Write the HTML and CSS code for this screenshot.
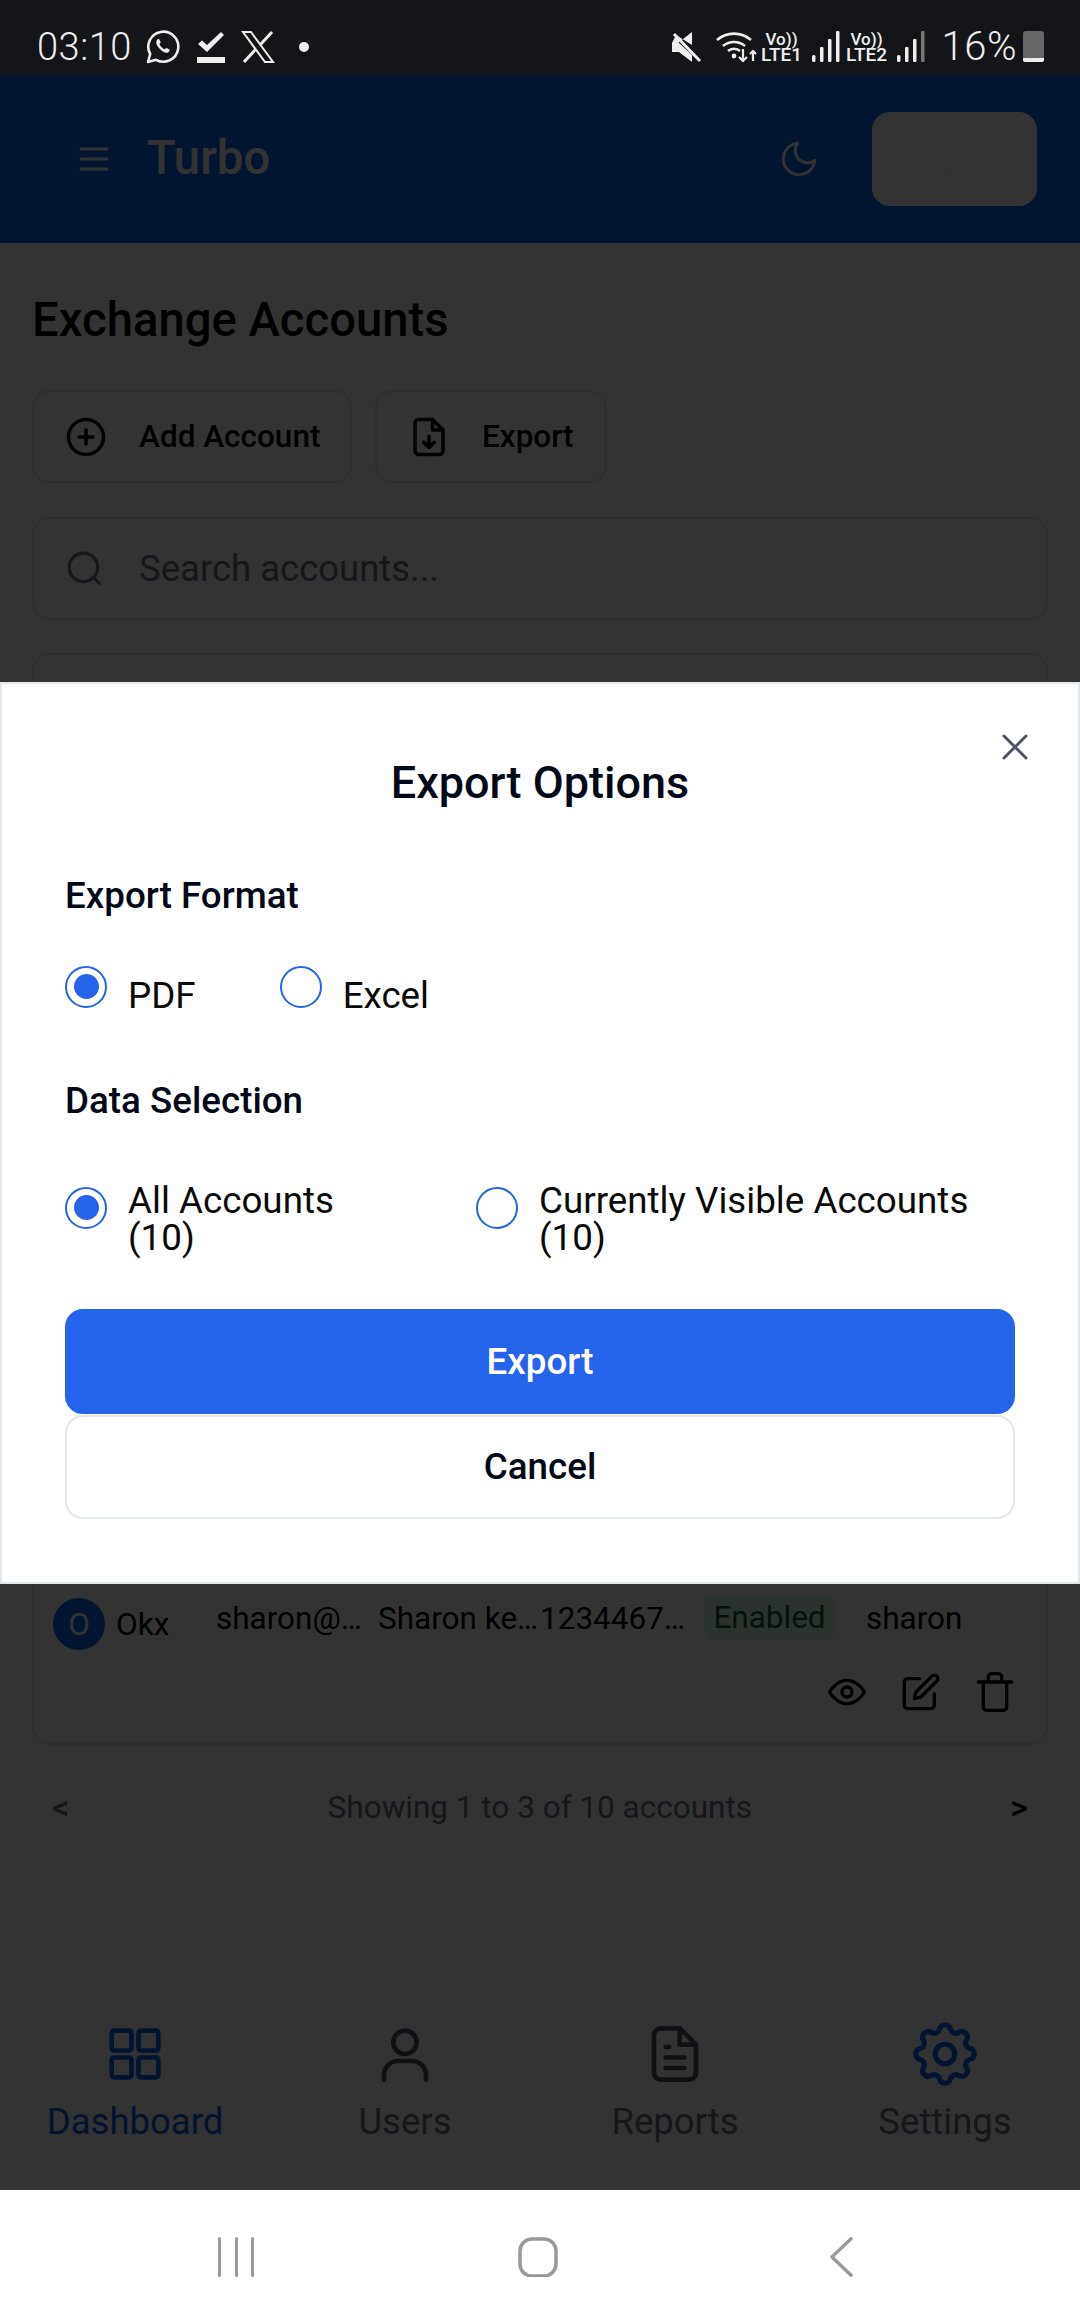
FILE: index.html
```html
<!DOCTYPE html>
<html lang="en">
<head>
    <meta charset="UTF-8">
    <meta name="viewport" content="width=device-width, initial-scale=1.0">
    <title>Exchange Accounts</title>
    <link rel="stylesheet" href="styles.css">
</head>
<body>
    <div class="phone">
        <div class="statusbar">
            <div class="status-left">
                <span class="status-text">03:10</span>
                <svg class="st-whatsapp" viewBox="0 0 36 36" fill="none" stroke="#eee" stroke-width="2.6"><path d="M3 33l2.2-8A15 15 0 1 1 11 30.8z" stroke-linejoin="round"/><path d="M12.5 10.5c-2 1.5-1.5 5 1.5 8.500s6.500 5.500 9 4.500c1.500-.6 2-2.500 1.500-3l-3-1.500c-.6-.2-1.500 1.300-2 1.300-1.500-.3-4.500-3.200-5-5 0-.6 1.300-1.300 1.200-2l-1.400-3c-.5-.6-1.500-.5-2.300.2z" fill="#eee" stroke="none"/></svg>
                <svg class="st-check" viewBox="0 0 28 32" fill="#eee"><path d="M1 13l4-3.500 5 4.500L24 1l3 3-17 17z"/><rect x="0" y="26" width="28" height="6"/></svg>
                <svg class="st-x" viewBox="0 0 34 32" fill="none" stroke="#eee" stroke-width="2"><path d="M2 1h8l22 30h-8z"/><path d="M31 1L19.500 13.500M14.500 18.500L3 31" stroke-width="3"/></svg>
                <span class="st-dot"></span>
            </div>
            <div class="status-right">
                <svg class="st-mute" viewBox="0 0 30 32" fill="#eee"><path d="M0 12h6L20 1v13L4 4z" /><path d="M0 12v9h7l13 10V24L6 11z"/><path d="M2 3l26 27" stroke="#eee" stroke-width="3"/></svg>
                <svg class="st-wifi" viewBox="0 0 42 32" fill="none" stroke="#eee" stroke-width="2.600"><path d="M1 9a26 26 0 0 1 34 0M7 15a17 17 0 0 1 22 0M12 20a9 9 0 0 1 12 0"/><circle cx="18" cy="25" r="2.400" fill="#eee" stroke="none"/><path d="M27 18v12M23 26l4 4 4-4M37 30V20M34 23l3-3 3 3" stroke-width="2.200"/></svg>
                <span class="lte"><span>Vo))</span><span>LTE1</span></span>
                <svg class="st-signal" viewBox="0 0 28 32" fill="#eee"><rect x="0" y="24" width="3.500" height="7" rx="1.500"/><rect x="8" y="16" width="3.500" height="15" rx="1"/><rect x="16" y="8" width="3.500" height="23" rx="1"/><rect x="24" y="0" width="3.500" height="31" rx="1"/></svg>
                <span class="lte lte2"><span>Vo))</span><span>LTE2</span></span>
                <svg class="st-signal st-signal2" viewBox="0 0 28 32" fill="#eee"><rect x="0" y="24" width="3.500" height="7" rx="1.500"/><rect x="8" y="16" width="3.500" height="15" rx="1"/><rect x="16" y="8" width="3.500" height="23" rx="1"/><rect x="24" y="0" width="3.500" height="31" rx="1" fill="#777"/></svg>
                <span class="status-text pct">16%</span>
                <span class="battery"></span>
            </div>
        </div>

        <div class="main">
            <header class="topbar">
                <svg class="burger" viewBox="0 0 30 24" fill="none" stroke="#fff" stroke-width="3" stroke-linecap="round"><path d="M2 2h26M2 12h26M2 22h26"/></svg>
                <span class="brand">Turbo</span>
                <svg class="moon" viewBox="0 0 24 24" fill="none" stroke="#fff" stroke-width="1.700" stroke-linecap="round" stroke-linejoin="round"><path d="M21 12.800A9 9 0 1 1 11.200 3a7 7 0 0 0 9.800 9.800z"/></svg>
                <button class="logout">Logout</button>
            </header>

            <div class="content">
                <h1>Exchange Accounts</h1>
                <div class="toolbar">
                    <button class="tool-btn add-btn">
                        <svg viewBox="0 0 24 24" fill="none" stroke="currentColor" stroke-width="2" stroke-linecap="round"><circle cx="12" cy="12" r="10"/><path d="M12 8v8M8 12h8"/></svg>
                        Add Account
                    </button>
                    <button class="tool-btn export-btn">
                        <svg viewBox="0 0 24 24" fill="none" stroke="currentColor" stroke-width="2" stroke-linecap="round" stroke-linejoin="round"><path d="M14 2H6a2 2 0 0 0-2 2v16a2 2 0 0 0 2 2h12a2 2 0 0 0 2-2V8z"/><path d="M14 2v6h6M12 11.500v6M9 15l3 3 3-3"/></svg>
                        Export
                    </button>
                </div>
                <div class="search">
                    <svg viewBox="0 0 24 24" fill="none" stroke="currentColor" stroke-width="2" stroke-linecap="round"><circle cx="11" cy="11" r="9"/><path d="M21 21l-3.500-3.500"/></svg>
                    <span>Search accounts...</span>
                </div>
                <div class="card">
                    <div class="acc-row">
                        <div class="acc-name"><span class="avatar">O</span><span class="okx">Okx</span></div>
                        <span class="cell c-email">sharon@…</span>
                        <span class="cell c-user">Sharon ke…</span>
                        <span class="cell c-key">1234467…</span>
                        <span class="badge">Enabled</span>
                        <span class="cell c-owner">sharon</span>
                    </div>
                    <div class="acc-actions">
                        <svg viewBox="0 0 24 24" fill="none" stroke="currentColor" stroke-width="2" stroke-linecap="round" stroke-linejoin="round"><path d="M1.500 12S5.500 5 12 5s10.500 7 10.500 7-4 7-10.500 7S1.500 12 1.500 12z"/><circle cx="12" cy="12" r="3"/></svg>
                        <svg viewBox="0 0 24 24" fill="none" stroke="currentColor" stroke-width="2" stroke-linecap="round" stroke-linejoin="round"><path d="M11 4H4a2 2 0 0 0-2 2v14a2 2 0 0 0 2 2h14a2 2 0 0 0 2-2v-7"/><path d="M18.500 2.500a2.100 2.100 0 0 1 3 3L12 15l-4 1 1-4z"/></svg>
                        <svg viewBox="0 0 24 24" fill="none" stroke="currentColor" stroke-width="2" stroke-linecap="round" stroke-linejoin="round"><path d="M2 6h20M19 6v15a2 2 0 0 1-2 2H7a2 2 0 0 1-2-2V6M8 6V3a2 2 0 0 1 2-2h4a2 2 0 0 1 2 2v3"/></svg>
                    </div>
                </div>
                <div class="pager">
                    <span class="pg-arrow pg-off">&lt;</span>
                    <span>Showing 1 to 3 of 10 accounts</span>
                    <span class="pg-arrow">&gt;</span>
                </div>
            </div>

            <nav class="bottomnav">
                <div class="nav-item active">
                    <svg viewBox="0 0 24 24" fill="none" stroke="currentColor" stroke-width="2" stroke-linejoin="round"><rect x="2" y="2" width="8.500" height="8.500" rx="1"/><rect x="13.500" y="2" width="8.500" height="8.500" rx="1"/><rect x="2" y="13.500" width="8.500" height="8.500" rx="1"/><rect x="13.500" y="13.500" width="8.500" height="8.500" rx="1"/></svg>
                    <span>Dashboard</span>
                </div>
                <div class="nav-item">
                    <svg viewBox="0 0 24 24" fill="none" stroke="currentColor" stroke-width="2" stroke-linecap="round"><circle cx="12" cy="7" r="5"/><path d="M3 23v-2a6 6 0 0 1 6-6h6a6 6 0 0 1 6 6v2"/></svg>
                    <span>Users</span>
                </div>
                <div class="nav-item">
                    <svg viewBox="0 0 24 24" fill="none" stroke="currentColor" stroke-width="2" stroke-linecap="round" stroke-linejoin="round"><path d="M14 1H6a3 3 0 0 0-3 3v16a3 3 0 0 0 3 3h12a3 3 0 0 0 3-3V8z"/><path d="M14 1v7h7M8 9h1.500M8 13.500h8M8 18h8"/></svg>
                    <span>Reports</span>
                </div>
                <div class="nav-item settings-item">
                    <svg viewBox="0 0 24 24" fill="none" stroke="currentColor" stroke-width="1.600" stroke-linecap="round" stroke-linejoin="round"><path d="M10.325 4.317c.426-1.756 2.924-1.756 3.350 0a1.724 1.724 0 002.573 1.066c1.543-.94 3.310.826 2.370 2.370a1.724 1.724 0 001.065 2.572c1.756.426 1.756 2.924 0 3.350a1.724 1.724 0 00-1.066 2.573c.94 1.543-.826 3.310-2.370 2.370a1.724 1.724 0 00-2.572 1.065c-.426 1.756-2.924 1.756-3.350 0a1.724 1.724 0 00-2.573-1.066c-1.543.94-3.310-.826-2.370-2.370a1.724 1.724 0 00-1.065-2.572c-1.756-.426-1.756-2.924 0-3.350a1.724 1.724 0 001.066-2.573c-.94-1.543.826-3.310 2.370-2.370.996.608 2.296.07 2.572-1.065z"/><circle cx="12" cy="12" r="3"/></svg>
                    <span>Settings</span>
                </div>
            </nav>

            <div class="overlay">
                <div class="modal">
                    <svg class="close" viewBox="0 0 26 26" fill="none" stroke="#4b5563" stroke-width="3" stroke-linecap="round"><path d="M2 2l22 22M24 2L2 24"/></svg>
                    <h2>Export Options</h2>

                    <div class="section-label">Export Format</div>
                    <div class="radio-row">
                        <label class="radio-item"><span class="radio checked"></span><span class="radio-text">PDF</span></label>
                        <label class="radio-item"><span class="radio"></span><span class="radio-text">Excel</span></label>
                    </div>

                    <div class="section-label second">Data Selection</div>
                    <div class="radio-row wide">
                        <label class="radio-item"><span class="radio checked"></span><span class="radio-text">All Accounts<br>(10)</span></label>
                        <label class="radio-item"><span class="radio"></span><span class="radio-text">Currently Visible Accounts<br>(10)</span></label>
                    </div>

                    <button class="btn-primary">Export</button>
                    <button class="btn-cancel">Cancel</button>
                </div>
            </div>
        </div>

        <div class="sysnav">
            <svg class="sys-recent" viewBox="0 0 36 40" fill="#999"><rect x="0" y="0" width="3" height="40" rx="1.500"/><rect x="17" y="0" width="3" height="40" rx="1.500"/><rect x="33" y="0" width="3" height="40" rx="1.500"/></svg>
            <svg class="sys-home" viewBox="0 0 40 40" fill="none" stroke="#999" stroke-width="3.500"><rect x="2" y="2" width="36" height="37" rx="12"/></svg>
            <svg class="sys-back" viewBox="0 0 24 42" fill="none" stroke="#999" stroke-width="3.500" stroke-linecap="round" stroke-linejoin="round"><path d="M22 2L2 21l20 19"/></svg>
        </div>
    </div>
</body>
</html>
```

FILE: styles.css
```css
* {
    box-sizing: border-box;
}

body {
    margin: 0;
    font-family: Roboto, "Liberation Sans", sans-serif;
    background: #fff;
}

button {
    font-family: inherit;
    cursor: pointer;
}

.phone {
    width: 1080px;
    height: 2316px;
    display: flex;
    flex-direction: column;
    overflow: hidden;
}

/* status bar */
.statusbar {
    height: 75px;
    flex: none;
    background: #131518;
    color: #eee;
    display: flex;
    justify-content: space-between;
    align-items: center;
    padding: 0 36px 0 37px;
}

.status-left, .status-right {
    display: flex;
    align-items: center;
    height: 75px;
    padding-top: 18px;
}

.status-text {
    font-size: 38px;
    font-weight: 300;
    letter-spacing: 0.5px;
}

.st-whatsapp {
    width: 36px;
    height: 36px;
    margin-left: 13px;
}

.st-check {
    width: 28px;
    height: 32px;
    margin-left: 16px;
}

.st-x {
    width: 34px;
    height: 32px;
    margin-left: 16px;
}

.st-dot {
    width: 10px;
    height: 10px;
    border-radius: 50%;
    background: #eee;
    margin-left: 24px;
}

.st-mute {
    width: 30px;
    height: 32px;
}

.st-wifi {
    width: 42px;
    height: 32px;
    margin-left: 14px;
}

.lte {
    display: flex;
    flex-direction: column;
    align-items: center;
    font-size: 19px;
    font-weight: 500;
    line-height: 16px;
    margin-left: 3px;
    width: 42px;
}

.lte span:first-child {
    font-size: 17px;
}

.lte2 {
    margin-left: 6px;
}

.st-signal {
    width: 28px;
    height: 32px;
    margin-left: 9px;
}

.pct {
    margin-left: 17px;
    font-size: 40px;
}

.battery {
    width: 21px;
    height: 31px;
    margin-left: 6px;
    border-radius: 3px 3px 2px 2px;
    background: linear-gradient(#666 27px, #eee 27px);
}

/* app behind the dialog */
.main {
    position: relative;
    flex: 1;
    display: flex;
    flex-direction: column;
    background: #fff;
    min-height: 0;
}

.topbar {
    height: 168px;
    flex: none;
    background: #1064eb;
    display: flex;
    align-items: center;
    padding: 0 43px 0 79px;
}

.burger {
    width: 30px;
    height: 24px;
}

.brand {
    color: #fff;
    font-size: 47.250px;
    font-weight: 500;
    margin-left: 38px;
    padding-bottom: 2px;
}

.moon {
    width: 42px;
    height: 42px;
    margin-left: auto;
    margin-right: 52px;
}

.logout {
    width: 165px;
    height: 94px;
    background: #fff;
    border: none;
    border-radius: 18px;
    color: #f9f9f9;
    font-size: 31px;
    font-weight: 500;
}

.content {
    padding: 45px 32px 0;
}

h1 {
    margin: 0;
    font-size: 47.250px;
    line-height: 64px;
    font-weight: 500;
    color: #000;
}

.toolbar {
    display: flex;
    gap: 23px;
    margin-top: 38px;
}

.tool-btn {
    height: 93px;
    display: flex;
    align-items: center;
    gap: 32px;
    padding: 0 31px;
    background: #fff;
    border: 2px solid #e5e7eb;
    border-radius: 18px;
    font-size: 31.500px;
    font-weight: 500;
    color: #000;
    white-space: nowrap;
}

.tool-btn svg {
    width: 42px;
    height: 42px;
    flex: none;
}

.add-btn {
    width: 320px;
}

.export-btn {
    width: 232px;
}

.search {
    height: 103px;
    margin-top: 34px;
    display: flex;
    align-items: center;
    gap: 35px;
    padding: 0 32px;
    border: 2px solid #e5e7eb;
    border-radius: 18px;
    font-size: 36.500px;
    color: #6b7280;
}

.search svg {
    width: 38px;
    height: 38px;
}

.card {
    height: 1092px;
    margin-top: 33px;
    padding: 0 31px 31px 19px;
    border: 2px solid #e5e7eb;
    border-radius: 18px;
    display: flex;
    flex-direction: column;
    justify-content: flex-end;
}

.acc-row {
    display: flex;
    align-items: flex-start;
    height: 78px;
    font-size: 31.500px;
    color: #000;
}

.acc-name {
    display: flex;
    align-items: center;
    width: 163px;
    padding-top: 4px;
}

.avatar {
    width: 52px;
    height: 52px;
    border-radius: 50%;
    background: #1064eb;
    color: #fff;
    display: flex;
    align-items: center;
    justify-content: center;
    font-size: 31.500px;
}

.okx {
    margin-left: 11px;
}

.cell {
    white-space: nowrap;
    padding-top: 6px;
}

.c-email {
    width: 162px;
}

.c-user {
    width: 162px;
}

.c-key {
    width: 164px;
}

.c-owner {
    margin-left: 31px;
}

.badge {
    width: 131px;
    height: 47px;
    display: flex;
    align-items: center;
    justify-content: center;
    background: #dcfce7;
    color: #166534;
    border-radius: 8px;
}

.acc-actions {
    display: flex;
    justify-content: flex-end;
    gap: 34px;
    color: #000;
}

.acc-actions svg {
    width: 40px;
    height: 40px;
}

.pager {
    display: flex;
    justify-content: space-between;
    align-items: center;
    margin-top: 42px;
    padding: 0 20px;
    font-size: 31.500px;
    color: #6b7280;
}

.pg-arrow {
    color: #000;
    font-weight: 500;
    font-size: 34px;
}

.pg-off {
    color: #6b7280;
}

.bottomnav {
    height: 211px;
    margin-top: auto;
    flex: none;
    display: grid;
    grid-template-columns: repeat(4, 270px);
    border-top: 2px solid #eceef1;
    padding-top: 45px;
}

.nav-item {
    display: flex;
    flex-direction: column;
    align-items: center;
    gap: 18px;
    font-size: 36.500px;
    color: #6b7280;
}

.nav-item svg {
    width: 56px;
    height: 56px;
    color: #4b5563;
}

.nav-item.active {
    color: #1064eb;
}

.nav-item.active svg, .settings-item svg {
    color: #1064eb;
}

.settings-item svg {
    width: 78px;
    height: 78px;
    margin: -11px 0;
}

/* dialog */
.overlay {
    position: absolute;
    inset: 0;
    background: rgba(0, 0, 0, 0.8);
    display: flex;
    align-items: center;
}

.modal {
    position: relative;
    width: 100%;
    background: #fff;
    border: 2px solid #e2e8f0;
    padding: 67px 63px 63px;
    color: #0a0a0a;
}

.close {
    position: absolute;
    top: 50px;
    right: 50px;
    width: 26px;
    height: 26px;
}

h2 {
    margin: 0;
    text-align: center;
    font-size: 45px;
    line-height: 64px;
    font-weight: 500;
    color: #020817;
}

.section-label {
    font-size: 36.750px;
    line-height: 50px;
    font-weight: 500;
    margin-top: 56px;
    color: #020817;
}

.section-label.second {
    margin-top: 62px;
}

.radio-row {
    display: flex;
    gap: 84px;
    margin-top: 45px;
}

.radio-row.wide {
    display: grid;
    grid-template-columns: 411px 1fr;
    gap: 0;
    margin-top: 56px;
    margin-bottom: 53px;
}

.radio-item {
    display: flex;
    align-items: flex-start;
    gap: 21px;
    font-size: 36.750px;
    line-height: 37px;
}

.radio {
    width: 42px;
    height: 42px;
    flex: none;
    border: 2.500px solid #2563eb;
    border-radius: 50%;
    display: flex;
    align-items: center;
    justify-content: center;
}

.radio.checked::after {
    content: "";
    width: 25px;
    height: 25px;
    border-radius: 50%;
    background: #2563eb;
}

.radio-text {
    margin-top: 11px;
}

.wide .radio {
    margin-top: 5px;
}

.wide .radio-text {
    margin-top: 0;
}

.btn-primary, .btn-cancel {
    display: block;
    width: 100%;
    font-size: 36.750px;
    font-weight: 500;
    border-radius: 18px;
}

.btn-primary {
    height: 105px;
    background: #2563eb;
    color: #fff;
    border: none;
}

.btn-cancel {
    height: 104px;
    margin-top: 1px;
    background: #fff;
    color: #020817;
    border: 2px solid #e2e8f0;
}

/* android nav */
.sysnav {
    height: 126px;
    flex: none;
    background: #fff;
    display: grid;
    grid-template-columns: 218px 36px 264px 40px 272px 23px;
    align-items: center;
    padding-top: 7px;
}

.sys-recent {
    grid-column: 2;
    width: 36px;
    height: 40px;
}

.sys-home {
    grid-column: 4;
    width: 40px;
    height: 40px;
}

.sys-back {
    grid-column: 6;
    width: 23px;
    height: 42px;
}
```
